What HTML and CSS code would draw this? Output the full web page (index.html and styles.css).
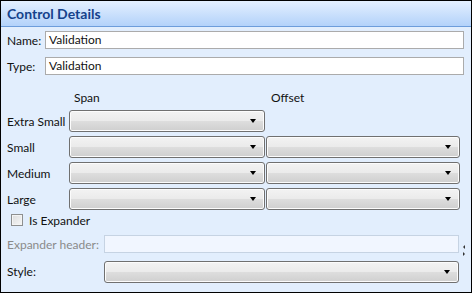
FILE: index.html
```html
<!DOCTYPE html>
<html lang="en">
<head>
  <meta charset="UTF-8">
  <title>Control Details</title>
  <link rel="stylesheet" href="styles.css">
</head>
<body>
  <div class="panel">
    <div class="header">Control Details</div>
    <div class="content">
      <div class="field">
        <span class="label">Name:</span>
        <div class="textbox">Validation</div>
      </div>
      <div class="field">
        <span class="label">Type:</span>
        <div class="textbox">Validation</div>
      </div>

      <div class="sizes">
        <span></span>
        <span class="colhead">Span</span>
        <span class="colhead">Offset</span>

        <span class="label">Extra Small</span>
        <div class="combo"><i class="arrow"></i></div>
        <span></span>

        <span class="label">Small</span>
        <div class="combo"><i class="arrow"></i></div>
        <div class="combo"><i class="arrow"></i></div>

        <span class="label">Medium</span>
        <div class="combo"><i class="arrow"></i></div>
        <div class="combo"><i class="arrow"></i></div>

        <span class="label">Large</span>
        <div class="combo"><i class="arrow"></i></div>
        <div class="combo"><i class="arrow"></i></div>
      </div>

      <div class="check-row">
        <span class="checkbox"></span>
        <span class="label">Is Expander</span>
      </div>

      <div class="wide-row">
        <span class="label disabled">Expander header:</span>
        <div class="textbox readonly"></div>
        <span class="splitter"><i class="tri-left"></i><i class="tri-right"></i></span>
      </div>
      <div class="wide-row">
        <span class="label">Style:</span>
        <div class="combo"><i class="arrow"></i></div>
      </div>
    </div>
  </div>
</body>
</html>
```

FILE: styles.css
```css
body {
  margin: 0;
  font-family: Lato, "Noto Sans", sans-serif;
  font-size: 12px;
  color: #111;
}
.panel {
  width: 470px;
  height: 291px;
  border: 1px solid #000;
  background-color: #e2eefd;
  display: flex;
  flex-direction: column;
}
.header {
  height: 25px;
  border-bottom: 1px solid #6d9ddb;
  background: linear-gradient(#e4f0ff, #b3d2fa);
  color: #15428b;
  font-weight: bold;
  font-size: 14px;
  line-height: 25px;
  padding-left: 6px;
}
.content {
  padding: 4px 0 0 6px;
}
.label {
  white-space: nowrap;
}
.label.disabled {
  color: #8a8a8a;
}
.field {
  display: flex;
  align-items: center;
  height: 18px;
  margin-bottom: 8px;
}
.field .label {
  width: 38px;
}
.textbox {
  flex: 1;
  height: 16px;
  line-height: 16px;
  margin-right: 7px;
  border: 1px solid #ababab;
  background-color: #fff;
  padding-left: 3px;
}
.textbox.readonly {
  background-color: #f1f6ff;
  border-color: #c6d3e3;
  margin-right: 0;
}
.sizes {
  display: grid;
  grid-template-columns: 61px 196px 194px;
  grid-template-rows: 16px repeat(4, 22px);
  column-gap: 1px;
  row-gap: 4px;
  margin-top: 15px;
  align-items: center;
}
.colhead {
  padding-left: 5px;
  align-self: start;
}
.combo {
  position: relative;
  height: 20px;
  border: 1px solid #707070;
  border-radius: 3px;
  background: linear-gradient(#f3f3f3 0%, #ebebeb 48%, #dddddd 52%, #cfcfcf 100%);
  box-shadow: inset 0 0 0 1px #fcfcfc;
}
.arrow {
  position: absolute;
  right: 8px;
  top: 8px;
  border-left: 3.5px solid transparent;
  border-right: 3.5px solid transparent;
  border-top: 4px solid #000;
}
.check-row {
  display: flex;
  align-items: center;
  gap: 6px;
  height: 16px;
  margin-top: 2px;
  padding-left: 4px;
}
.checkbox {
  width: 10px;
  height: 10px;
  border: 1px solid #8e8f8f;
  background: linear-gradient(135deg, #dcdcdc, #f7f7f7);
  box-shadow: inset 0 0 0 1px #f4f4f4;
}
.wide-row {
  display: grid;
  grid-template-columns: 97px 355px 12px;
  align-items: center;
  margin-top: 5px;
}
.wide-row .textbox {
  height: 16px;
}
.wide-row .combo {
  margin-top: 1px;
}
.splitter {
  display: flex;
  flex-direction: column;
  gap: 3px;
  padding: 12px 0 0 4px;
  height: 10px;
}
.tri-left {
  width: 0;
  border-top: 2px solid transparent;
  border-bottom: 2px solid transparent;
  border-right: 2px solid #333;
}
.tri-right {
  width: 0;
  border-top: 2px solid transparent;
  border-bottom: 2px solid transparent;
  border-left: 2px solid #333;
}
```
